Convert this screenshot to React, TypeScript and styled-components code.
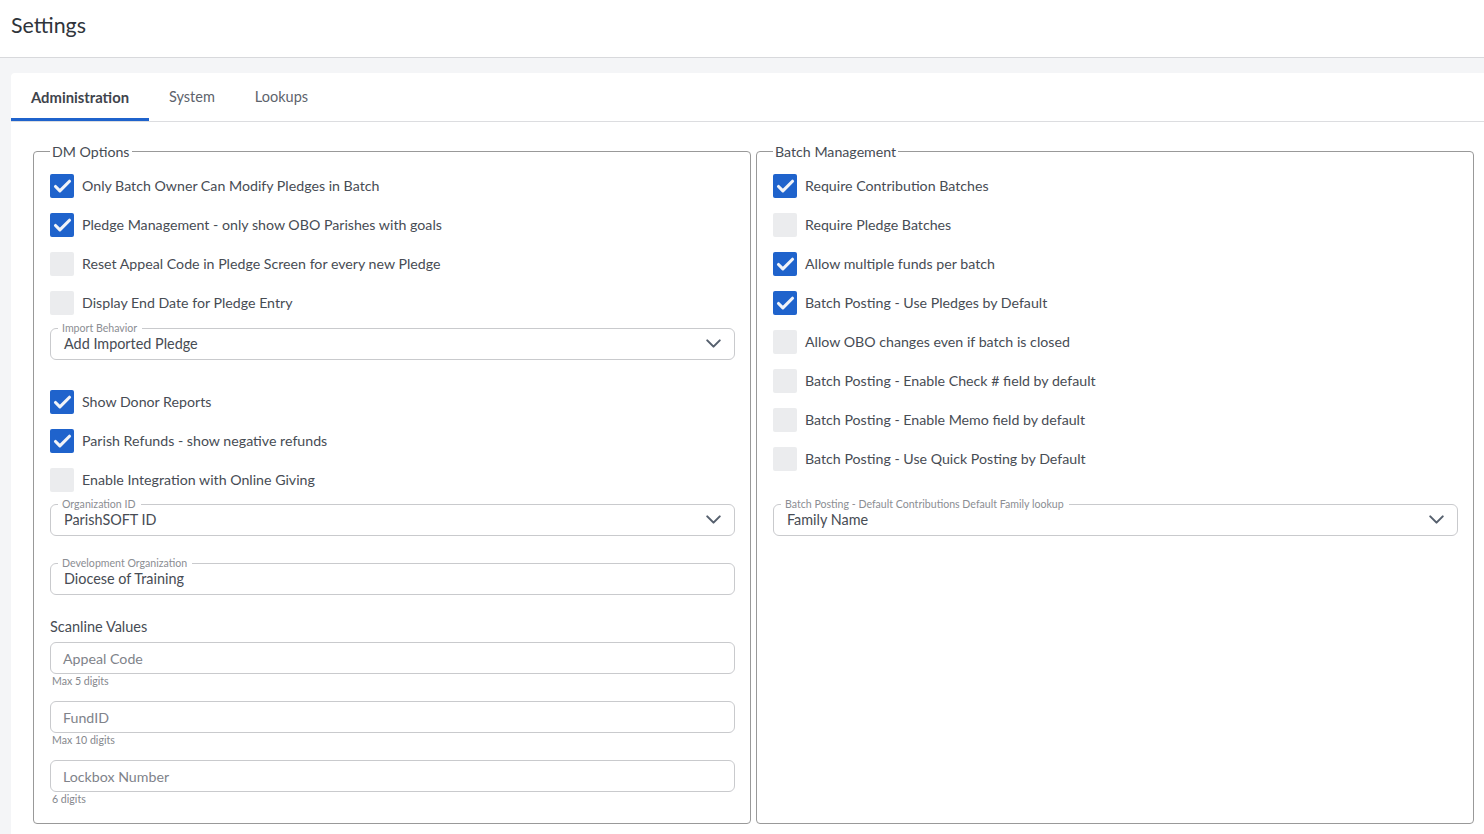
import React from "react";
import styled, { createGlobalStyle } from "styled-components";
import { Check, ChevronDown } from "lucide-react";

const FONT = `"Lato", "Open Sans", sans-serif`;

const GlobalStyle = createGlobalStyle`
  html, body {
    margin: 0;
    height: 100%;
    background: #f4f5f7;
    font-family: ${FONT};
    color: #3a3f47;
  }
  * { box-sizing: border-box; }
`;

const dmTop = [
  { label: "Only Batch Owner Can Modify Pledges in Batch", checked: true },
  { label: "Pledge Management - only show OBO Parishes with goals", checked: true },
  { label: "Reset Appeal Code in Pledge Screen for every new Pledge", checked: false },
  { label: "Display End Date for Pledge Entry", checked: false },
];

const dmMiddle = [
  { label: "Show Donor Reports", checked: true },
  { label: "Parish Refunds - show negative refunds", checked: true },
  { label: "Enable Integration with Online Giving", checked: false },
];

const batch = [
  { label: "Require Contribution Batches", checked: true },
  { label: "Require Pledge Batches", checked: false },
  { label: "Allow multiple funds per batch", checked: true },
  { label: "Batch Posting - Use Pledges by Default", checked: true },
  { label: "Allow OBO changes even if batch is closed", checked: false },
  { label: "Batch Posting - Enable Check # field by default", checked: false },
  { label: "Batch Posting - Enable Memo field by default", checked: false },
  { label: "Batch Posting - Use Quick Posting by Default", checked: false },
];

const scanline = [
  { placeholder: "Appeal Code", hint: "Max 5 digits" },
  { placeholder: "FundID", hint: "Max 10 digits" },
  { placeholder: "Lockbox Number", hint: "6 digits" },
];

const CheckRow = ({ label, checked }: { label: string; checked: boolean }) => (
  <SRow>
    <SBox $checked={checked}>{checked && <Check size={21} strokeWidth={3.6} color="#f2f4f8" />}</SBox>
    <span>{label}</span>
  </SRow>
);

const SelectField = ({ legend, value }: { legend: string; value: string }) => (
  <SField>
    <legend>{legend}</legend>
    <span>{value}</span>
    <ChevronDown size={25} strokeWidth={2} color="#56606e" />
  </SField>
);

const App = () => {
  return (
    <>
      <GlobalStyle />
      <SPage>
        <SHeader>Settings</SHeader>
        <SCard>
          <STabs>
            <STab $active>Administration</STab>
            <STab>System</STab>
            <STab>Lookups</STab>
          </STabs>
          <SColumns>
            <SGroup>
              <legend>DM Options</legend>
              <SChecks>
                {dmTop.map(item => (
                  <CheckRow key={item.label} {...item} />
                ))}
              </SChecks>
              <SFieldSlot $top={6}>
                <SelectField legend="Import Behavior" value="Add Imported Pledge" />
              </SFieldSlot>
              <SChecks $top={30}>
                {dmMiddle.map(item => (
                  <CheckRow key={item.label} {...item} />
                ))}
              </SChecks>
              <SFieldSlot $top={5}>
                <SelectField legend="Organization ID" value="ParishSOFT ID" />
              </SFieldSlot>
              <SFieldSlot $top={20}>
                <SField>
                  <legend>Development Organization</legend>
                  <span>Diocese of Training</span>
                </SField>
              </SFieldSlot>
              <SSectionLabel>Scanline Values</SSectionLabel>
              {scanline.map(item => (
                <SInputWrap key={item.placeholder}>
                  <SInput>{item.placeholder}</SInput>
                  <SHint>{item.hint}</SHint>
                </SInputWrap>
              ))}
            </SGroup>
            <SGroup>
              <legend>Batch Management</legend>
              <SChecks>
                {batch.map(item => (
                  <CheckRow key={item.label} {...item} />
                ))}
              </SChecks>
              <SFieldSlot $top={26}>
                <SelectField legend="Batch Posting - Default Contributions Default Family lookup" value="Family Name" />
              </SFieldSlot>
            </SGroup>
          </SColumns>
        </SCard>
      </SPage>
    </>
  );
};

export default App;

const SPage = styled.div`
  height: 100vh;
  overflow: hidden;
  display: flex;
  flex-direction: column;
`;

const SHeader = styled.header`
  height: 58px;
  flex: none;
  background: #fff;
  border-bottom: 1px solid #d8d9dc;
  padding: 12px 11px 0;
  font-size: 21.4px;
  line-height: 26px;
  color: #2f343b;
`;

const SCard = styled.main`
  flex: 1;
  margin: 15px 0 0 11px;
  background: #fff;
  border-radius: 4px 0 0 0;
`;

const STabs = styled.nav`
  display: flex;
  height: 49px;
  border-bottom: 1px solid #dcdde0;
`;

const STab = styled.div<{ $active?: boolean }>`
  height: 48px;
  padding: 2px 20px 0;
  display: flex;
  align-items: center;
  font-size: ${props => (props.$active ? 14.8 : 14.5)}px;
  font-weight: ${props => (props.$active ? 700 : 400)};
  color: ${props => (props.$active ? "#3f444c" : "#5d636c")};
  border-bottom: 3px solid ${props => (props.$active ? "#1f63cc" : "transparent")};
`;

const SColumns = styled.div`
  display: grid;
  grid-template-columns: 718px 718px;
  gap: 5px;
  padding: 20px 0 0 22px;
`;

const SGroup = styled.fieldset`
  margin: 0;
  height: 682px;
  min-width: 0;
  padding: 13px 15px 0 16px;
  border: 1px solid #999;
  border-radius: 4px;

  & > legend {
    padding: 0 2px;
    margin-left: 0;
    font-size: 14.2px;
    line-height: 19px;
    color: #474c54;
  }
`;

const SChecks = styled.div<{ $top?: number }>`
  display: flex;
  flex-direction: column;
  gap: 15px;
  margin-top: ${props => props.$top ?? 0}px;
`;

const SRow = styled.label`
  display: flex;
  align-items: center;
  gap: 8px;
  height: 24px;
  font-size: 14.2px;
  color: #474c54;

  & > span:last-child {
    margin-top: -2px;
  }
`;

const SBox = styled.span<{ $checked: boolean }>`
  width: 24px;
  height: 24px;
  flex: none;
  display: flex;
  align-items: center;
  justify-content: center;
  border-radius: 2px;
  background: ${props => (props.$checked ? "#1f63cc" : "#ebecee")};
`;

const SFieldSlot = styled.div<{ $top: number }>`
  margin-top: ${props => props.$top}px;
`;

const SField = styled.fieldset`
  margin: 0;
  height: 39px;
  min-width: 0;
  padding: 1px 8px 0 13px;
  display: flex;
  align-items: center;
  justify-content: space-between;
  border: 1px solid #c9cacd;
  border-radius: 6px;
  font-size: 14.4px;
  color: #474c54;

  & > legend {
    padding: 0 5px 0 4px;
    margin-left: -6px;
    margin-bottom: -8px;
    font-size: 10.6px;
    line-height: 14px;
    color: #8b8e93;
  }
`;

const SSectionLabel = styled.div`
  margin: 22px 0 6px;
  font-size: 14.5px;
  line-height: 19px;
  color: #474c54;
`;

const SInputWrap = styled.div`
  margin-bottom: 13px;
`;

const SInput = styled.div`
  height: 32px;
  padding: 0 12px;
  display: flex;
  align-items: center;
  border: 1px solid #c9cacd;
  border-radius: 6px;
  font-size: 14.2px;
  color: #80838a;
`;

const SHint = styled.div`
  padding-left: 2px;
  font-size: 10.6px;
  line-height: 14px;
  color: #85888d;
`;
